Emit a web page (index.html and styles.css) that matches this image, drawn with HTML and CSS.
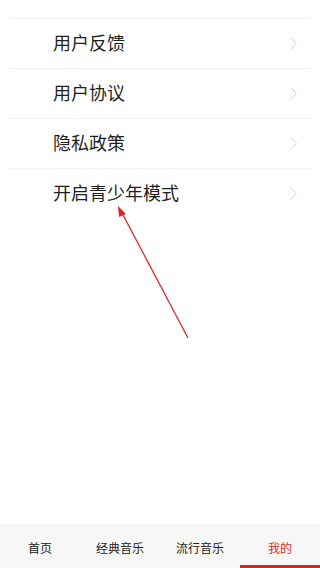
FILE: index.html
```
<!DOCTYPE html>
<html lang="zh-CN">
<head>
    <meta charset="UTF-8">
    <meta name="viewport" content="width=device-width, initial-scale=1.0">
    <title>我的</title>
    <link rel="stylesheet" href="styles.css">
</head>
<body>
    <div class="page">
        <!-- 设置列表 -->
        <ul class="menu-list">
            <li class="menu-item"><span>用户反馈</span><svg class="chevron" width="7" height="13" viewBox="0 0 7 13"><polyline points="0.5,0.5 6.5,6.5 0.5,12.5" fill="none" stroke="#d4d4d4" stroke-width="1"/></svg></li>
            <li class="menu-item"><span>用户协议</span><svg class="chevron" width="7" height="13" viewBox="0 0 7 13"><polyline points="0.5,0.5 6.5,6.5 0.5,12.5" fill="none" stroke="#d4d4d4" stroke-width="1"/></svg></li>
            <li class="menu-item"><span>隐私政策</span><svg class="chevron" width="7" height="13" viewBox="0 0 7 13"><polyline points="0.5,0.5 6.5,6.5 0.5,12.5" fill="none" stroke="#d4d4d4" stroke-width="1"/></svg></li>
            <li class="menu-item"><span>开启青少年模式</span><svg class="chevron" width="7" height="13" viewBox="0 0 7 13"><polyline points="0.5,0.5 6.5,6.5 0.5,12.5" fill="none" stroke="#d4d4d4" stroke-width="1"/></svg></li>
        </ul>

        <!-- 标注箭头 -->
        <svg class="mark-arrow" width="320" height="568" viewBox="0 0 320 568">
            <line x1="188" y1="338" x2="122" y2="213" stroke="#e0262b" stroke-width="1.3"/>
            <polygon points="118,206 126,214 119,217" fill="#e0262b"/>
        </svg>
    </div>

    <!-- 底部导航 -->
    <nav class="tab-bar">
        <div class="tab">首页</div>
        <div class="tab">经典音乐</div>
        <div class="tab">流行音乐</div>
        <div class="tab active">我的</div>
    </nav>
</body>
</html>
```

FILE: styles.css
```
/* 全局样式 */
body, html {
    margin: 0;
    padding: 0;
    width: 100%;
    height: 100%;
    overflow: hidden;
    font-family: "Noto Sans CJK SC", "Liberation Sans", sans-serif;
    background-color: #fff;
    color: #222;
}

body {
    display: flex;
    flex-direction: column;
}

.page {
    flex: 1;
    position: relative;
}

/* 列表 */
.menu-list {
    list-style: none;
    margin: 0 9px;
    padding: 18px 0 0;
}

.menu-item {
    height: 50px;
    box-sizing: border-box;
    border-top: 1px solid #f1f1f1;
    display: flex;
    align-items: center;
    justify-content: space-between;
    padding: 0 14px 4px 44px;
    font-size: 18px;
    color: #1f1f1f;
}

.chevron {
    display: block;
    margin-top: 3px;
}

.mark-arrow {
    position: absolute;
    top: 0;
    left: 0;
}

/* 底部导航 */
.tab-bar {
    height: 44px;
    display: flex;
    background-color: #f7f7f7;
}

.tab {
    flex: 1;
    display: flex;
    align-items: center;
    justify-content: center;
    font-size: 12px;
    color: #222;
    box-sizing: border-box;
    padding-top: 2px;
}

.tab.active {
    color: #d8281f;
    border-bottom: 3px solid #d8281f;
    padding-top: 5px;
}
```
